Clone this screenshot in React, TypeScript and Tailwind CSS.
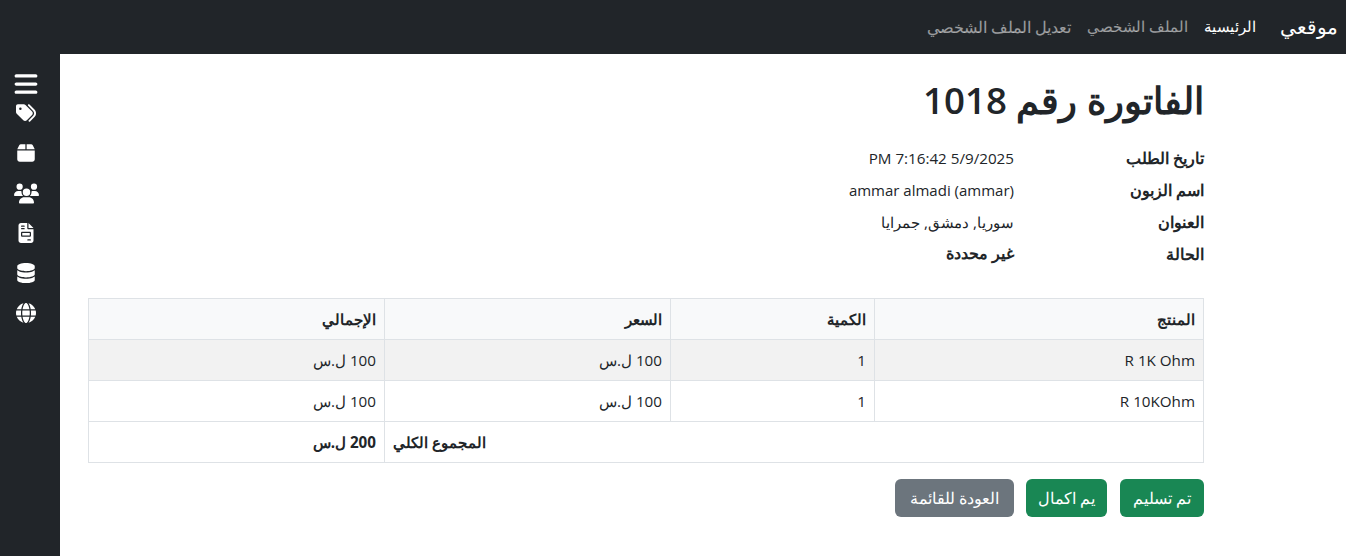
import { FaBars, FaTags, FaBox, FaUsers, FaFileInvoice, FaDatabase, FaGlobe } from "react-icons/fa6";

const info = [
    { label: "تاريخ الطلب", value: "5/9/2025 7:16:42 PM", style: "" },
    { label: "اسم الزبون", value: "ammar almadi (ammar)", style: "text-[15px]" },
    { label: "العنوان", value: "سوريا, دمشق, جمرايا", style: "text-[15.3px]" },
    { label: "الحالة", value: "غير محددة", style: "text-[15.5px] font-bold" },
];

const rows = [
    { name: "R 1K Ohm", qty: "1", price: "100 ل.س", total: "100 ل.س", bg: "bg-[#f2f2f2]" },
    { name: "R 10KOhm", qty: "1", price: "100 ل.س", total: "100 ل.س", bg: "bg-white" },
];

const sideIcons = [
    { Icon: FaTags, size: "text-[20px]" },
    { Icon: FaBox, size: "text-[20px]" },
    { Icon: FaUsers, size: "text-[25px]" },
    { Icon: FaFileInvoice, size: "text-[20px]" },
    { Icon: FaDatabase, size: "text-[20px]" },
    { Icon: FaGlobe, size: "text-[20px]" },
];

const cell = "border border-[#dee2e6] px-2 h-[41px]";

export default function App() {
    return (
        <div className="flex h-[556px] flex-col overflow-hidden bg-white font-['Open_Sans','Noto_Sans',sans-serif] text-[15.2px] text-[#212529]">
            <nav dir="rtl" className="flex h-[54px] shrink-0 items-center bg-[#212529] pb-[2px] pr-2">
                <span className="ml-6 text-[20.2px] text-white">موقعي</span>
                <div className="flex items-center gap-4 pt-[1px] text-[15.3px]">
                    <span className="text-white">الرئيسية</span>
                    <span className="text-white/55">الملف الشخصي</span>
                    <span className="text-[16px] text-white/55">تعديل الملف الشخصي</span>
                </div>
            </nav>
            <div className="flex min-h-0 flex-1">
                <aside className="flex w-[60px] shrink-0 flex-col bg-[#212529] pr-2 pt-[18px] text-white">
                    <div className="flex h-[24px] items-center justify-center">
                        <FaBars className="text-[26px]" />
                    </div>
                    <div className="mt-[-3px] flex flex-col">
                        {sideIcons.map(({ Icon, size }, i) => (
                            <div key={i} className="flex h-[40px] items-center justify-center">
                                <Icon className={size} />
                            </div>
                        ))}
                    </div>
                </aside>
                <main dir="rtl" className="ml-[28px] w-[1116px]">
                    <h1 className="mt-[19px] h-[54px] text-[36.7px] leading-[54px] font-semibold">الفاتورة رقم 1018</h1>
                    <dl className="mt-[15px] flex flex-col">
                        {info.map((row) => (
                            <div key={row.label} className="flex h-[32px] items-center">
                                <dt className="w-[190px] text-[16.2px] font-semibold">{row.label}</dt>
                                <dd className={row.style}>{row.value}</dd>
                            </div>
                        ))}
                    </dl>
                    <table className="mt-[28px] w-[1115px] table-fixed border-collapse text-right">
                        <colgroup>
                            <col className="w-[329px]" />
                            <col className="w-[204px]" />
                            <col className="w-[286px]" />
                            <col className="w-[296px]" />
                        </colgroup>
                        <thead>
                            <tr className="bg-[#f8f9fa] font-bold">
                                <th className={cell}>المنتج</th>
                                <th className={cell}>الكمية</th>
                                <th className={cell}>السعر</th>
                                <th className={cell}>الإجمالي</th>
                            </tr>
                        </thead>
                        <tbody>
                            {rows.map((row) => (
                                <tr key={row.name} className={row.bg}>
                                    <td className={cell}>{row.name}</td>
                                    <td className={cell}>{row.qty}</td>
                                    <td className={cell}>{row.price}</td>
                                    <td className={cell}>{row.total}</td>
                                </tr>
                            ))}
                            <tr>
                                <td colSpan={3} className={`${cell} !text-left font-semibold`}>المجموع الكلي</td>
                                <td className={`${cell} font-bold`}>200 ل.س</td>
                            </tr>
                        </tbody>
                    </table>
                    <div className="mt-[16px] flex gap-3 text-[16px] text-white">
                        <button className="ml-[1px] h-[38px] w-[84px] rounded-md bg-[#198754]">تم تسليم</button>
                        <button className="h-[38px] w-[81px] rounded-md bg-[#198754]">يم اكمال</button>
                        <button className="h-[38px] w-[119px] rounded-md bg-[#6c757d]">العودة للقائمة</button>
                    </div>
                </main>
            </div>
        </div>
    );
}
